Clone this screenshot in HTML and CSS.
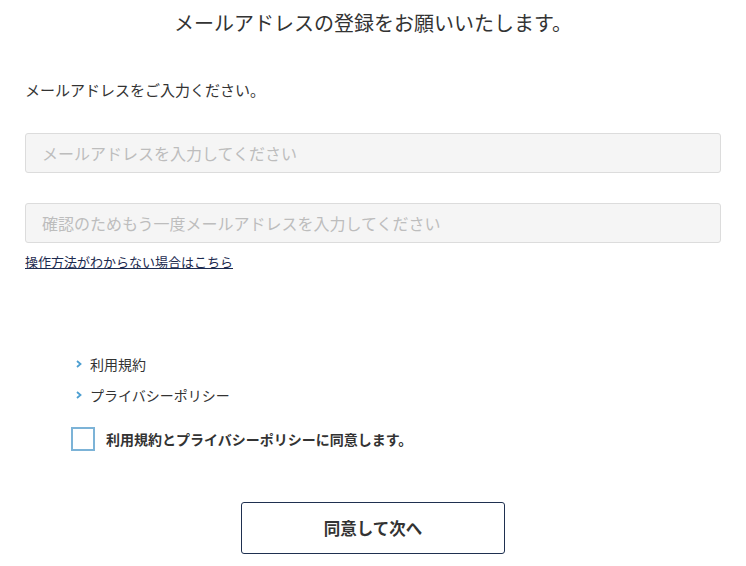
FILE: index.html
```html
<!DOCTYPE html>
<html lang="ja">
<head>
<meta charset="utf-8">
<title>メールアドレスの登録</title>
<link rel="stylesheet" href="styles.css">
</head>
<body>
<main class="page">
  <h1 class="title">メールアドレスの登録をお願いいたします。</h1>
  <p class="lead">メールアドレスをご入力ください。</p>
  <form class="form">
    <input class="field" type="email" placeholder="メールアドレスを入力してください">
    <input class="field field-confirm" type="email" placeholder="確認のためもう一度メールアドレスを入力してください">
    <a class="help" href="#">操作方法がわからない場合はこちら</a>

    <ul class="terms">
      <li class="terms-item"><svg class="chev" width="6" height="8" viewBox="0 0 6 8"><path d="M1 1 L4.5 4 L1 7" fill="none" stroke="#4d9fd1" stroke-width="1.8"/></svg>利用規約</li>
      <li class="terms-item"><svg class="chev" width="6" height="8" viewBox="0 0 6 8"><path d="M1 1 L4.5 4 L1 7" fill="none" stroke="#4d9fd1" stroke-width="1.8"/></svg>プライバシーポリシー</li>
    </ul>

    <label class="agree">
      <span class="box"></span>
      <span class="agree-text">利用規約とプライバシーポリシーに同意します。</span>
    </label>

    <div class="actions">
      <button class="next" type="button">同意して次へ</button>
    </div>
  </form>
</main>
</body>
</html>
```
FILE: styles.css
```css
html, body {
  margin: 0;
  padding: 0;
  background: #fff;
}

body {
  font-family: "Noto Sans CJK JP", "Noto Sans", sans-serif;
  color: #333;
}

.page {
  padding: 0 25px;
}

.title {
  margin: 0;
  padding-top: 8px;
  font-size: 20px;
  font-weight: 400;
  line-height: 30px;
  text-align: center;
  color: #333;
}

.lead {
  margin: 42px 0 0;
  font-size: 15px;
  line-height: 20px;
}

.form {
  display: flex;
  flex-direction: column;
}

.field {
  box-sizing: border-box;
  width: 100%;
  height: 40px;
  margin: 33px 0 0;
  padding: 0 16px;
  border: 1px solid #dcdcdc;
  border-radius: 3px;
  background: #f5f5f5;
  font-family: inherit;
  font-size: 16px;
  color: #333;
}

.field::placeholder {
  color: #bdbdbd;
}

.field-confirm {
  margin-top: 30px;
}

.help {
  align-self: flex-start;
  margin-top: 10px;
  font-size: 13px;
  line-height: 18px;
  color: #1d2b4f;
  text-decoration: underline;
}

.terms {
  list-style: none;
  margin: 83px 0 0;
  padding: 0 0 0 51px;
  display: flex;
  flex-direction: column;
  gap: 11px;
}

.terms-item {
  display: flex;
  align-items: center;
  gap: 8px;
  font-size: 14px;
  line-height: 20px;
  color: #333;
}

.chev {
  display: block;
}

.agree {
  display: flex;
  align-items: center;
  gap: 11px;
  margin: 22px 0 0 46px;
}

.box {
  box-sizing: border-box;
  width: 24px;
  height: 24px;
  border: 2px solid #7cb3d7;
  background: #fff;
}

.agree-text {
  font-size: 14px;
  font-weight: 700;
  color: #333;
}

.actions {
  display: flex;
  justify-content: center;
  margin-top: 51px;
}

.next {
  box-sizing: border-box;
  width: 264px;
  height: 52px;
  border: 1px solid #1f3050;
  border-radius: 3px;
  background: #fff;
  font-family: inherit;
  font-size: 16.5px;
  font-weight: 700;
  color: #333;
  cursor: pointer;
}
```
